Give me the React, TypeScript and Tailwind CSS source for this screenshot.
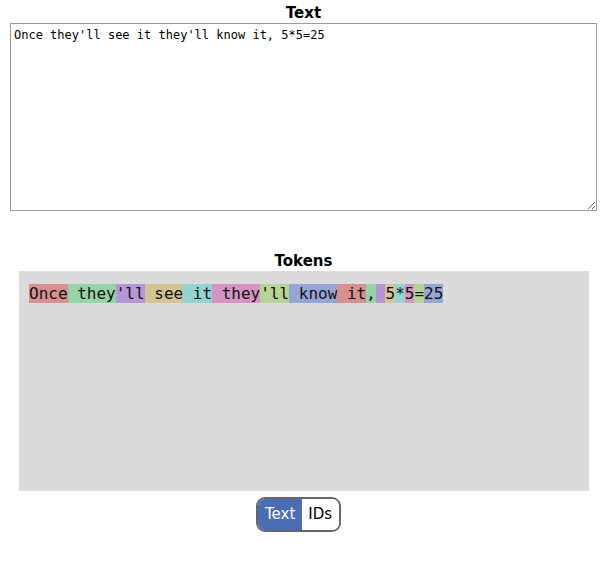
import { useState } from "react";

const tokens = [
  "Once",
  " they",
  "'ll",
  " see",
  " it",
  " they",
  "'ll",
  " know",
  " it",
  ",",
  " ",
  "5",
  "*",
  "5",
  "=",
  "25",
];

const ids = [12805, 814, 3358, 1518, 433, 814, 3358, 1440, 433, 11, 220, 20, 9, 20, 28, 914];

const colors = [
  "bg-[#d4918e]",
  "bg-[#96d3a6]",
  "bg-[#b496d4]",
  "bg-[#d4c495]",
  "bg-[#94d4d4]",
  "bg-[#d494c4]",
  "bg-[#b5d495]",
  "bg-[#96a6d4]",
];

export default function App() {
  const [text, setText] = useState("Once they'll see it they'll know it, 5*5=25");
  const [mode, setMode] = useState<"text" | "ids">("text");

  return (
    <div className="w-[600px] h-[572px] bg-white font-['DejaVu_Sans',sans-serif] text-black">
      <div className="ml-[10px] w-[587px]">
        <h3 className="pt-[3px] text-center text-[15px] font-bold leading-[20px]">Text</h3>
        <textarea
          value={text}
          onChange={(e) => setText(e.target.value)}
          className="block h-[188px] w-full border border-[#9a9a9a] px-[3px] pt-[4px] pb-[2px] font-['DejaVu_Sans_Mono',monospace] text-[12px] leading-[14px] outline-none"
        />
        <h3 className="mt-[40px] text-center text-[15px] font-bold leading-[20px]">Tokens</h3>
      </div>
      <div className="ml-[19px] h-[220px] w-[570px] bg-[#dbdbdb] px-[10px] pt-[11px] pb-[10px] font-['DejaVu_Sans_Mono',monospace] text-[16px] leading-6 text-[#111]">
        {mode === "text"
          ? tokens.map((t, i) => (
              <span key={i} className={`whitespace-pre ${colors[i % colors.length]}`}>
                {t}
              </span>
            ))
          : ids.map((id, i) => (
              <span key={i} className={`${colors[i % colors.length]}`}>
                {id}
                {i < ids.length - 1 ? ", " : ""}
              </span>
            ))}
      </div>
      <div className="ml-[256px] mt-[6px] flex h-[35px] w-fit overflow-hidden rounded-[9px] border-2 border-[#666] text-[15px]">
        <button
          type="button"
          onClick={() => setMode("text")}
          className={`px-[7px] ${mode === "text" ? "bg-[#4a6db3] text-white" : "bg-white text-black"}`}
        >
          Text
        </button>
        <button
          type="button"
          onClick={() => setMode("ids")}
          className={`pl-[6px] pr-[7px] ${mode === "ids" ? "bg-[#4a6db3] text-white" : "bg-white text-black"}`}
        >
          IDs
        </button>
      </div>
    </div>
  );
}
